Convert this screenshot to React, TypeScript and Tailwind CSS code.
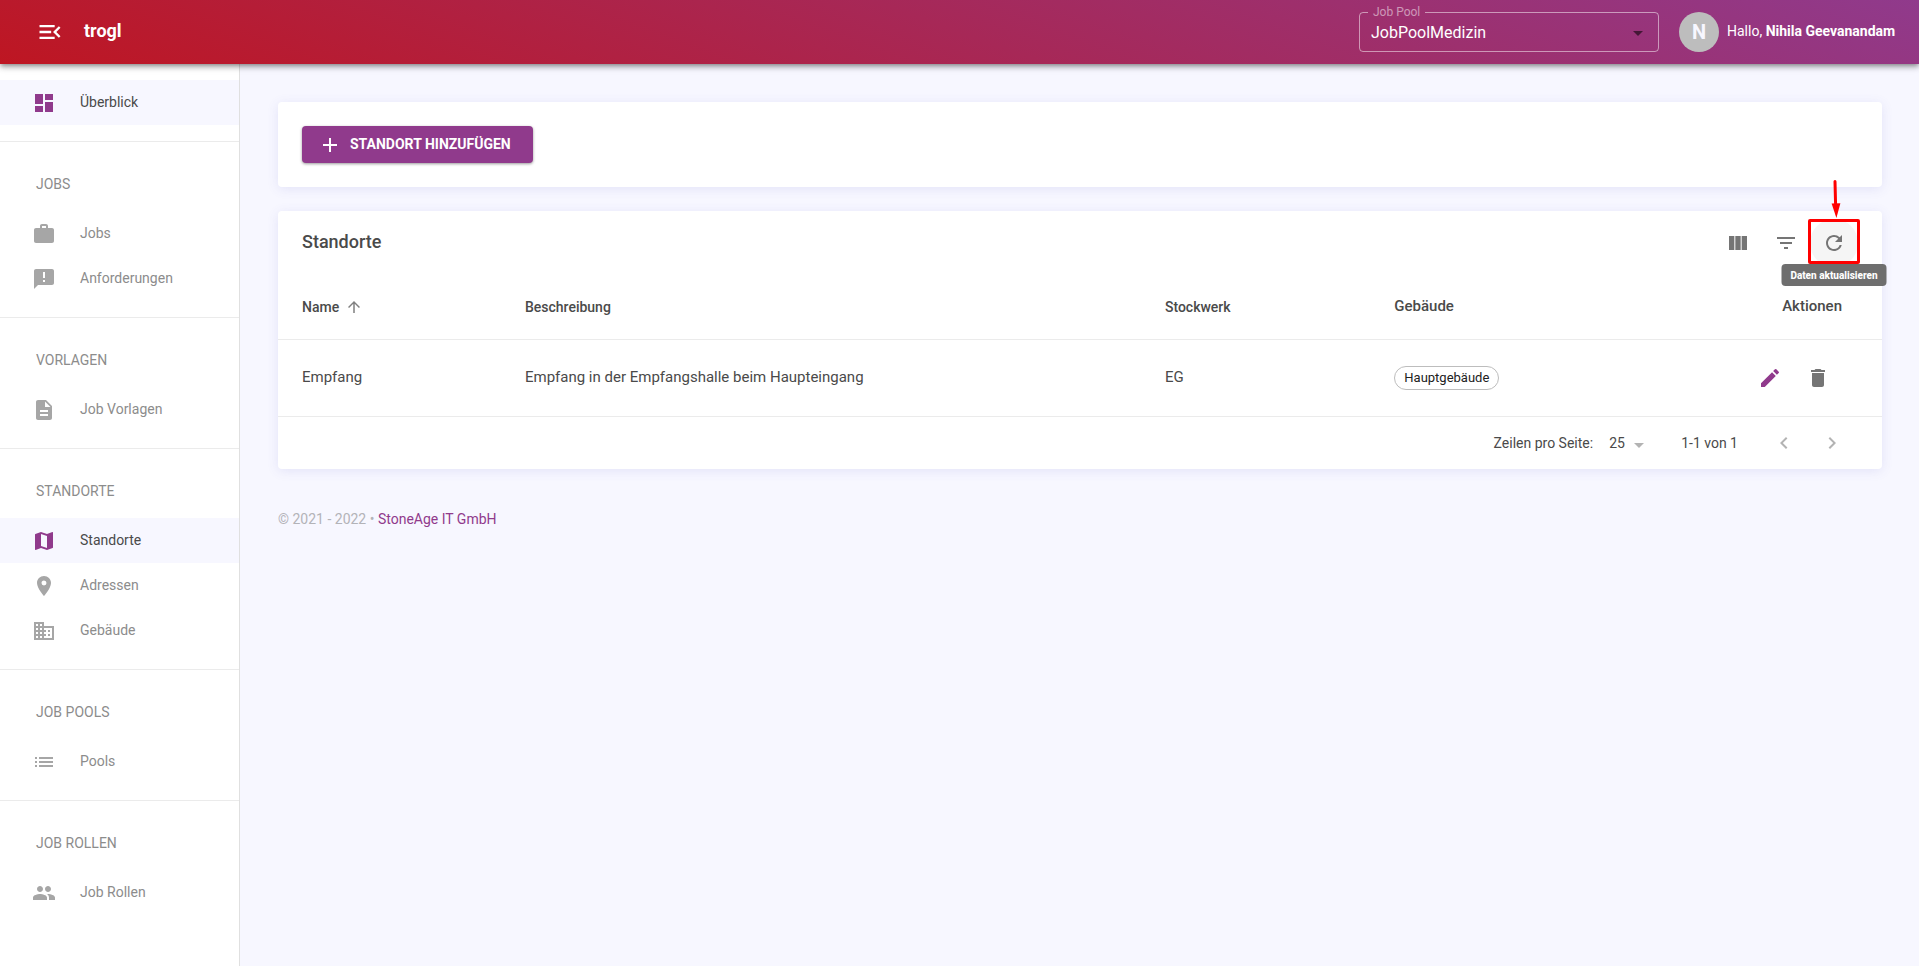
import * as React from "react"
import type { IconType } from "react-icons"
import {
  MdAdd,
  MdAnnouncement,
  MdArrowDropDown,
  MdArrowUpward,
  MdBusiness,
  MdChevronLeft,
  MdChevronRight,
  MdDashboard,
  MdDelete,
  MdDescription,
  MdEdit,
  MdFilterList,
  MdList,
  MdMap,
  MdMenuOpen,
  MdPeople,
  MdPlace,
  MdRefresh,
  MdViewColumn,
  MdWork,
} from "react-icons/md"

interface NavItem {
  label: string
  icon: IconType
  active?: boolean
}

interface NavSection {
  title?: string
  items: NavItem[]
}

const sections: NavSection[] = [
  { items: [{ label: "Überblick", icon: MdDashboard, active: true }] },
  {
    title: "Jobs",
    items: [
      { label: "Jobs", icon: MdWork },
      { label: "Anforderungen", icon: MdAnnouncement },
    ],
  },
  { title: "Vorlagen", items: [{ label: "Job Vorlagen", icon: MdDescription }] },
  {
    title: "Standorte",
    items: [
      { label: "Standorte", icon: MdMap, active: true },
      { label: "Adressen", icon: MdPlace },
      { label: "Gebäude", icon: MdBusiness },
    ],
  },
  { title: "Job Pools", items: [{ label: "Pools", icon: MdList }] },
  { title: "Job Rollen", items: [{ label: "Job Rollen", icon: MdPeople }] },
]

const locations = [
  {
    name: "Empfang",
    description: "Empfang in der Empfangshalle beim Haupteingang",
    floor: "EG",
    building: "Hauptgebäude",
  },
]

function Header() {
  return (
    <header className="relative z-10 flex h-16 shrink-0 items-center bg-[linear-gradient(20deg,#be1622,#903a8c)] pr-5 pl-9 text-white shadow-[0_2px_4px_-1px_rgba(0,0,0,0.3),0_4px_5px_rgba(0,0,0,0.16),0_1px_10px_rgba(0,0,0,0.14)]">
      <button type="button" aria-label="Menü einklappen" className="mr-5">
        <MdMenuOpen className="size-7" />
      </button>
      <span className="pb-0.5 text-lg font-bold">trogl</span>
      <fieldset className="mb-[5px] ml-auto h-[45px] w-[300px] rounded border border-white/50">
        <legend className="ml-2 px-[5px] text-xs leading-[11px] text-white/50">
          <label htmlFor="pool">Job Pool</label>
        </legend>
        <div className="relative">
          <select
            id="pool"
            className="h-[30px] w-full appearance-none bg-transparent px-[11px] text-base outline-none"
          >
            <option>JobPoolMedizin</option>
          </select>
          <MdArrowDropDown className="pointer-events-none absolute top-[3px] right-2 size-6 text-black/55" />
        </div>
      </fieldset>
      <span className="mr-2 ml-5 grid size-10 place-items-center rounded-full bg-[#bdbdbd] text-xl font-bold text-[#f7f7ff]">
        N
      </span>
      <span className="w-[172px] pb-0.5 text-sm whitespace-nowrap">
        Hallo, <b>Nihila Geevanandam</b>
      </span>
    </header>
  )
}

function Sidebar() {
  return (
    <nav className="w-60 shrink-0 border-r border-[#e0e0e0] bg-white text-sm">
      {sections.map((section, index) => (
        <section key={index} className="border-b border-[#ebebeb] py-4 last:border-b-0">
          {section.title ? (
            <h2 className="flex h-[53px] items-center pb-0.5 pl-9 text-[#8c8c8c] uppercase">
              {section.title}
            </h2>
          ) : null}
          {section.items.map(({ label, icon: Icon, active }) => (
            <a
              key={label}
              href="#"
              data-active={active}
              className="group flex h-[45px] items-center gap-6 pl-8 text-[#8c8c8c] data-active:bg-[#f7f7ff] data-active:text-[#4a4a4a]"
            >
              <Icon className="size-6 text-[#a6a6a6] group-data-active:text-[#903a8c]" />
              <span className="pb-0.5">{label}</span>
            </a>
          ))}
        </section>
      ))}
    </nav>
  )
}

function IconButton({
  label,
  children,
  className = "text-[#757575]",
}: {
  label: string
  children: React.ReactNode
  className?: string
}) {
  return (
    <button
      type="button"
      aria-label={label}
      className={`grid size-12 place-items-center rounded-full ${className}`}
    >
      {children}
    </button>
  )
}

function RefreshHint() {
  return (
    <div className="relative">
      <IconButton label="Daten aktualisieren" className="bg-[#f5f5f5] text-[#757575]">
        <MdRefresh className="size-6" />
      </IconButton>
      <span className="pointer-events-none absolute top-0 -left-0.5 h-[45px] w-[52px] rounded-[2px] border-3 border-[#ff0000]" />
      <svg
        aria-hidden="true"
        viewBox="0 0 10 38"
        className="pointer-events-none absolute -top-[39px] left-[21px] h-[38px] w-[10px]"
      >
        <path d="M4 1.5 L4.6 25" stroke="#ff0000" strokeWidth="3" strokeLinecap="round" />
        <path d="M0.6 23.6 L9.4 23.2 L5.4 38 Z" fill="#ff0000" />
      </svg>
      <span
        role="tooltip"
        className="absolute top-[45px] left-1/2 z-10 flex h-[22px] w-[105px] -translate-x-1/2 items-center justify-center rounded bg-[#6e6e6e] text-[10px] font-extrabold whitespace-nowrap text-white"
      >
        Daten aktualisieren
      </span>
    </div>
  )
}

function LocationTable() {
  return (
    <table className="w-full table-fixed text-left text-[15px] text-[#4a4a4a]">
      <thead>
        <tr className="h-16 border-b border-[#ebebeb] text-sm">
          <th className="w-[13.9%] pl-6 font-medium">
            <span className="flex items-center gap-1.5">
              Name <MdArrowUpward className="size-[18px] text-[#808080]" />
            </span>
          </th>
          <th className="w-[39.9%] pl-6 font-medium">Beschreibung</th>
          <th className="w-[14.3%] pl-6 font-medium">Stockwerk</th>
          <th className="pl-6 text-[15px] font-medium">Gebäude</th>
          <th className="pr-10 text-right text-[15px] font-medium">Aktionen</th>
        </tr>
      </thead>
      <tbody>
        {locations.map((row) => (
          <tr key={row.name} className="h-[77px] border-b border-[#ebebeb]">
            <td className="pl-6">{row.name}</td>
            <td className="pl-6">{row.description}</td>
            <td className="pl-6">{row.floor}</td>
            <td className="pl-6">
              <span className="inline-flex h-6 items-center rounded-full border border-[#bdbdbd] px-[9px] text-[13px] text-[#212121]">
                {row.building}
              </span>
            </td>
            <td className="pr-10">
              <div className="flex justify-end">
                <IconButton label="Bearbeiten" className="text-[#903a8c]">
                  <MdEdit className="size-6" />
                </IconButton>
                <IconButton label="Löschen">
                  <MdDelete className="size-6" />
                </IconButton>
              </div>
            </td>
          </tr>
        ))}
      </tbody>
    </table>
  )
}

function Pagination() {
  return (
    <div className="flex h-[52px] items-center justify-end pr-[26px] text-sm text-[#4a4a4a]">
      <label htmlFor="rows">Zeilen pro Seite:</label>
      <div className="relative mr-8 ml-4">
        <select id="rows" className="w-10 appearance-none bg-transparent outline-none">
          <option>25</option>
        </select>
        <MdArrowDropDown className="pointer-events-none absolute top-0 -right-0.5 size-6 text-[#b3b3b3]" />
      </div>
      <span className="mr-[22px]">1-1 von 1</span>
      <IconButton label="Vorherige Seite" className="text-[#b3b3b3]">
        <MdChevronLeft className="size-6" />
      </IconButton>
      <IconButton label="Nächste Seite" className="text-[#b3b3b3]">
        <MdChevronRight className="size-6" />
      </IconButton>
    </div>
  )
}

export default function App() {
  return (
    <div className="flex min-h-screen flex-col bg-[#f7f7ff] font-[Roboto,sans-serif]">
      <Header />
      <div className="flex grow">
        <Sidebar />
        <main className="flex min-w-0 grow flex-col gap-6 pt-[38px] pr-[37px] pl-[38px]">
          <div className="rounded bg-white p-6 shadow-[0_2px_12px_rgba(80,80,200,0.12)]">
            <button
              type="button"
              className="flex h-[37px] items-center gap-2 rounded bg-[#903a8c] pr-[22px] pl-4 text-sm font-bold text-white uppercase shadow-[0_1px_3px_rgba(0,0,0,0.4)]"
            >
              <MdAdd className="size-6" />
              <span className="pb-0.5">Standort hinzufügen</span>
            </button>
          </div>
          <div className="rounded bg-white shadow-[0_2px_12px_rgba(80,80,200,0.12)]">
            <div className="flex h-16 items-center px-6">
              <h1 className="mr-auto pb-0.5 text-lg font-medium text-[#4a4a4a]">Standorte</h1>
              <IconButton label="Spalten">
                <MdViewColumn className="size-6" />
              </IconButton>
              <IconButton label="Filter">
                <MdFilterList className="size-6" />
              </IconButton>
              <RefreshHint />
            </div>
            <LocationTable />
            <Pagination />
          </div>
          <footer className="pt-4 text-sm text-[#b3b3b8]">
            © 2021 - 2022 •{" "}
            <a href="#" className="text-[#903a8c]">
              StoneAge IT GmbH
            </a>
          </footer>
        </main>
      </div>
    </div>
  )
}
